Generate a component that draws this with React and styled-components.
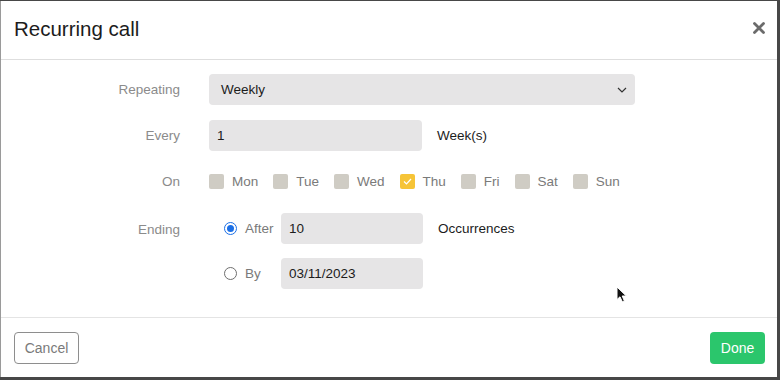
import React, { useState } from 'react'
import styled, { createGlobalStyle } from 'styled-components'

const GlobalStyle = createGlobalStyle`
    html, body {
        margin: 0;
        padding: 0;
        background: #474747;
        font-family: "Liberation Sans", Arial, Helvetica, sans-serif;
    }
`

const DAYS = ['Mon', 'Tue', 'Wed', 'Thu', 'Fri', 'Sat', 'Sun']

const App = () => {
    const [days, setDays] = useState(['Thu'])
    const [ending, setEnding] = useState('after')

    const toggleDay = (day) => {
        setDays(days.includes(day) ? days.filter(d => d !== day) : [...days, day])
    }

    return (
        <>
            <GlobalStyle/>
            <Modal>
                <Header>
                    <Title>Recurring call</Title>
                    <CloseButton aria-label="Close">
                        <svg width="12" height="12" viewBox="0 0 12 12">
                            <path d="M1.5 1.5 L10.5 10.5 M10.5 1.5 L1.5 10.5" stroke="#6b6b6b" strokeWidth="2.8" strokeLinecap="round"/>
                        </svg>
                    </CloseButton>
                </Header>

                <Body>
                    <Row>
                        <Label>Repeating</Label>
                        <Select>
                            <span>Weekly</span>
                            <svg width="10" height="6" viewBox="0 0 10 6">
                                <path d="M1 1 L5 5 L9 1" fill="none" stroke="#333" strokeWidth="1.2"/>
                            </svg>
                        </Select>
                    </Row>

                    <Row>
                        <Label>Every</Label>
                        <Input $width={213} defaultValue="1"/>
                        <Unit>Week(s)</Unit>
                    </Row>

                    <Row>
                        <Label>On</Label>
                        <Days>
                            {DAYS.map(day => (
                                <Day key={day} onClick={() => toggleDay(day)}>
                                    <Checkbox $checked={days.includes(day)}>
                                        {days.includes(day) && (
                                            <svg width="9" height="7" viewBox="0 0 9 7">
                                                <path d="M1 3.5 L3.5 6 L8 1" fill="none" stroke="#fff" strokeWidth="1.2"/>
                                            </svg>
                                        )}
                                    </Checkbox>
                                    <DayName>{day}</DayName>
                                </Day>
                            ))}
                        </Days>
                    </Row>

                    <Row $top>
                        <Label $offset>Ending</Label>
                        <Endings>
                            <EndingRow>
                                <RadioLabel onClick={() => setEnding('after')}>
                                    <Radio $checked={ending === 'after'}/>
                                    <span>After</span>
                                </RadioLabel>
                                <Input $width={142} defaultValue="10"/>
                                <Unit>Occurrences</Unit>
                            </EndingRow>
                            <EndingRow>
                                <RadioLabel onClick={() => setEnding('by')}>
                                    <Radio $checked={ending === 'by'}/>
                                    <span>By</span>
                                </RadioLabel>
                                <Input $width={142} defaultValue="03/11/2023"/>
                            </EndingRow>
                        </Endings>
                    </Row>

                    <Cursor width="12" height="17" viewBox="0 0 12 17">
                        <path d="M1 1 L1 13.5 L4 10.8 L6.3 15.8 L8.4 14.9 L6.2 10 L10.3 10 Z" fill="#111" stroke="#fff" strokeWidth="1"/>
                    </Cursor>
                </Body>

                <Footer>
                    <CancelButton>Cancel</CancelButton>
                    <DoneButton>Done</DoneButton>
                </Footer>
            </Modal>
        </>
    )
}


const Modal = styled.div`
    position: relative;
    margin-top: 1px;
    width: 777px;
    height: 376px;
    background: #fff;
    border-left: 1px solid #9a9a9a;
    display: flex;
    flex-direction: column;
    box-sizing: border-box;
`

const Header = styled.div`
    height: 59px;
    box-sizing: border-box;
    border-bottom: 1px solid #dedede;
    display: flex;
    align-items: center;
    justify-content: space-between;
    padding: 0 12px 2px 13px;
`

const Title = styled.h2`
    margin: 0;
    font-size: 20.5px;
    font-weight: normal;
    color: #1c1c1c;
`

const CloseButton = styled.button`
    border: none;
    background: none;
    padding: 0;
    display: flex;
    cursor: pointer;
    margin-top: -3px;
`

const Body = styled.div`
    position: relative;
    flex: 1;
    padding-top: 14px;
    display: flex;
    flex-direction: column;
    gap: 15px;
`

const Row = styled.div`
    display: flex;
    align-items: ${({ $top }) => $top ? 'flex-start' : 'center'};
    min-height: 31px;
`

const Label = styled.div`
    width: 179px;
    margin-right: 29px;
    padding-top: ${({ $offset }) => $offset ? '2px' : '0'};
    text-align: right;
    line-height: 31px;
    font-size: 13.5px;
    color: #8b8b8b;
`

const Select = styled.div`
    width: 426px;
    height: 31px;
    box-sizing: border-box;
    padding: 0 8px 0 12px;
    background: #e6e5e6;
    border-radius: 4px;
    display: flex;
    align-items: center;
    justify-content: space-between;
    font-size: 13.5px;
    color: #1c1c1c;
`

const Input = styled.input`
    width: ${({ $width }) => $width}px;
    height: 31px;
    box-sizing: border-box;
    border: none;
    outline: none;
    border-radius: 4px;
    background: #e6e5e6;
    padding: 0 8px;
    font-family: inherit;
    font-size: 13.5px;
    color: #1c1c1c;
`

const Unit = styled.span`
    margin-left: 15px;
    font-size: 13.5px;
    color: #1c1c1c;
`

const Days = styled.div`
    display: flex;
    align-items: center;
    gap: 15px;
`

const Day = styled.label`
    display: flex;
    align-items: center;
    gap: 8px;
    cursor: pointer;
`

const Checkbox = styled.span`
    width: 15px;
    height: 15px;
    border-radius: 2px;
    background: ${({ $checked }) => $checked ? '#f6c437' : '#cfccc4'};
    display: flex;
    align-items: center;
    justify-content: center;
`

const DayName = styled.span`
    font-size: 13.5px;
    color: #7a7a7a;
`

const Endings = styled.div`
    display: flex;
    flex-direction: column;
    gap: 14px;
    margin-top: 1px;
`

const EndingRow = styled.div`
    display: flex;
    align-items: center;
    height: 31px;
`

const RadioLabel = styled.label`
    width: 72px;
    padding-left: 15px;
    box-sizing: border-box;
    display: flex;
    align-items: center;
    gap: 8px;
    font-size: 13.5px;
    color: #7a7a7a;
    cursor: pointer;
`

const Radio = styled.span`
    width: 13px;
    height: 13px;
    border-radius: 50%;
    box-sizing: border-box;
    border: ${({ $checked }) => $checked ? '1.5px solid #1b6fe6' : '1px solid #6e6e6e'};
    display: flex;
    align-items: center;
    justify-content: center;

    &::after {
        content: '';
        width: 7px;
        height: 7px;
        border-radius: 50%;
        background: ${({ $checked }) => $checked ? '#1b6fe6' : 'transparent'};
    }
`

const Cursor = styled.svg`
    position: absolute;
    left: 615px;
    top: 226px;
`

const Footer = styled.div`
    height: 60px;
    box-sizing: border-box;
    border-top: 1px solid #e4e4e4;
    display: flex;
    align-items: center;
    justify-content: space-between;
    padding: 0 12px 0 13px;
`

const BaseButton = styled.button`
    height: 32px;
    border-radius: 4px;
    font-family: inherit;
    font-size: 14px;
    cursor: pointer;
    padding: 0;
`

const CancelButton = styled(BaseButton)`
    width: 65px;
    background: #fff;
    border: 1px solid #8e8e8e;
    color: #7a7a7a;
`

const DoneButton = styled(BaseButton)`
    width: 55px;
    background: #2bc66c;
    border: none;
    color: #fff;
`

export default App
